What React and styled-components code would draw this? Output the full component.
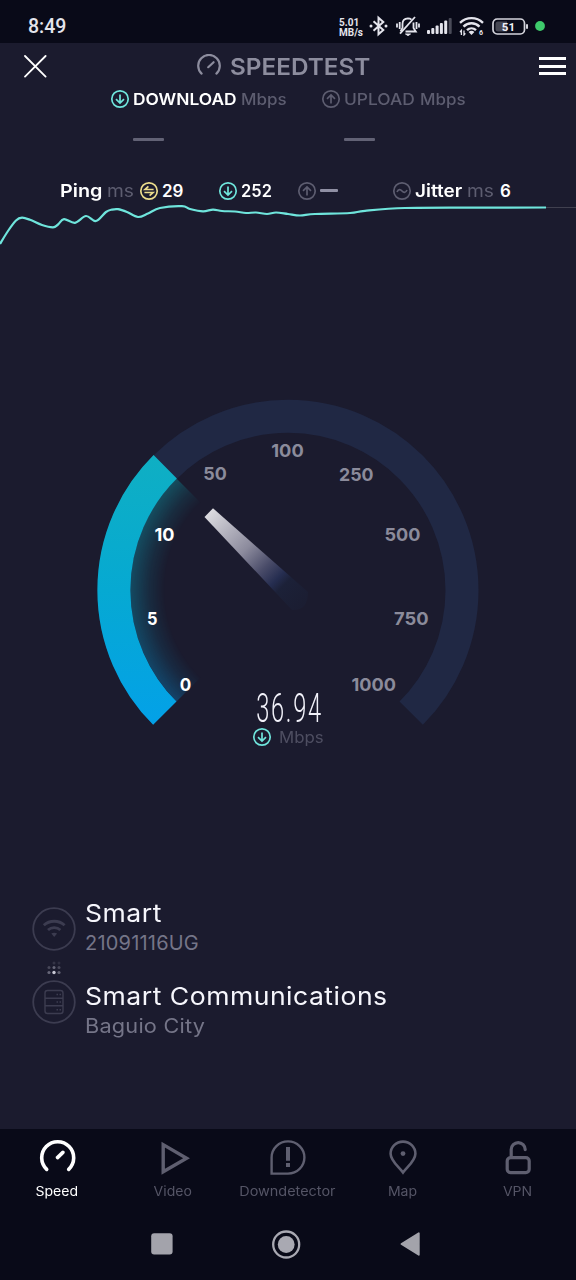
import React from "react";
import styled, {createGlobalStyle} from "styled-components";

const GlobalStyle = createGlobalStyle`
    * {
        box-sizing: border-box;
    }
    body {
        margin: 0;
        background: #1b1b2e;
        font-family: Inter, "Open Sans", sans-serif;
    }
    svg {
        display: block;
        flex-shrink: 0;
    }
`;

const Screen = styled.div`
    width: 576px;
    height: 1280px;
    display: flex;
    flex-direction: column;
    background: #1b1b2e;
    overflow: hidden;
`;

const StatusBar = styled.div`
    height: 43px;
    padding: 10px 31px 0 28px;
    display: flex;
    align-items: center;
    justify-content: space-between;
    background: #090a18;
    color: #e4e4ec;
    font-family: Roboto, sans-serif;
`;

const Clock = styled.span`
    font-size: 19.5px;
    font-weight: 500;
    line-height: 32px;
    padding-top: 1px;
`;

const StatusIcons = styled.div`
    display: flex;
    align-items: center;
    margin-top: -1px;
`;

const NetSpeed = styled.div`
    width: 30px;
    padding-top: 3px;
    display: flex;
    flex-direction: column;
    font-size: 10px;
    font-weight: 700;
    white-space: nowrap;
    span{
        height: 10px;
        line-height: 10px;
    }
`;

const StatusIcon = styled.svg`
    margin-right: ${props => props.$gap || 0}px;
`;

const Header = styled.div`
    height: 46px;
    padding: 0 10px 0 24px;
    display: grid;
    grid-template-columns: 173px 1fr 27px;
    align-items: center;
`;

const Brand = styled.div`
    display: flex;
    align-items: center;
    gap: 9px;
    color: #8d8d9e;
`;

const BrandName = styled.span`
    padding-top: 1px;
    font-size: 23.5px;
    font-weight: 600;
    line-height: 30px;
    transform: scaleX(1.035);
    transform-origin: left;
`;

const Burger = styled.div`
    display: flex;
    flex-direction: column;
    gap: 4.6px;
    span{
        height: 3px;
        background: #ffffff;
    }
`;

const Results = styled.div`
    height: 91px;
    display: flex;
`;

const Result = styled.div`
    width: ${props => props.$width}px;
    padding-left: ${props => props.$left}px;
    display: flex;
    flex-direction: column;
`;

const Line = styled.div`
    height: 20px;
    display: flex;
    align-items: center;
`;

const Label = styled.span`
    width: ${props => props.$width}px;
    margin-left: ${props => props.$left || 0}px;
    color: ${props => props.$color || "#ffffff"};
    font-size: ${props => props.$size || 16}px;
    font-weight: ${props => props.$weight || 600};
    line-height: 20px;
    white-space: nowrap;
    flex-shrink: 0;
    transform: scaleX(${props => props.$stretch || 1});
    transform-origin: left;
`;

const Dash = styled.div`
    width: ${props => props.$width}px;
    height: 3px;
    margin: ${props => props.$margin};
    border-radius: 1px;
    background: ${props => props.$color};
`;

const Stats = styled(Line)`
    padding-left: 60px;
    height: 21px;
`;

const ChartWrap = styled.div`
    height: 50px;
    margin-top: -1px;
`;

const GaugeWrap = styled.div`
    margin-top: 149px;
    height: 288px;
    display: flex;
    justify-content: center;
    svg{
        overflow: visible;
    }
`;

const Reading = styled.div`
    height: 73px;
    display: flex;
    flex-direction: column;
    align-items: center;
`;

const Speed = styled.div`
    height: 40px;
    margin-left: 3px;
    color: #f2f2fa;
    font-family: Roboto, sans-serif;
    font-size: 41.5px;
    font-weight: 300;
    line-height: 42px;
    letter-spacing: 3px;
    transform: scaleX(0.57);
`;

const Info = styled.div`
    flex: 1;
    padding: 138px 32px 0;
    display: flex;
    gap: 9px;
`;

const InfoIcons = styled.div`
    width: 44px;
    padding-top: 9px;
    display: flex;
    flex-direction: column;
    align-items: center;
`;

const InfoText = styled.div`
    display: flex;
    flex-direction: column;
`;

const InfoName = styled.div`
    height: 30px;
    color: #f6f6fc;
    font-size: 24.5px;
    font-weight: 400;
    line-height: 30px;
    letter-spacing: 0.45px;
    white-space: nowrap;
    transform: scaleX(1.085);
    transform-origin: left;
`;

const InfoDetail = styled.div`
    height: 30px;
    margin-bottom: 23px;
    color: #757588;
    font-size: 20px;
    font-weight: 400;
    line-height: 31px;
    letter-spacing: 0.2px;
    transform: scaleX(${props => props.$stretch});
    transform-origin: left;
`;

const TabBar = styled.div`
    height: 79px;
    padding-top: 9px;
    display: grid;
    grid-template-columns: repeat(5, 1fr);
    background: #090a18;
`;

const Tab = styled.div`
    display: flex;
    flex-direction: column;
    align-items: center;
    color: ${props => props.$active ? "#ffffff" : "#5f5f70"};
    span{
        margin-top: 4px;
        margin-right: 1px;
        font-size: 13px;
        line-height: 18px;
        color: ${props => props.$active ? "#ffffff" : "#555566"};
        transform: scaleX(${props => props.$stretch || 1.08});
    }
`;

const SystemNav = styled.div`
    height: 72px;
    padding-left: 151px;
    display: flex;
    align-items: center;
    background: #090a18;
`;

const NavIcon = styled.svg`
    margin-right: ${props => props.$gap || 0}px;
`;

const MUTED = "#5d5d70";
const CYAN = "#6fe5dc";

const RingIcon = ({kind, color}) => (
    <svg width="20" height="20" viewBox="0 0 20 20" fill="none" stroke={color} strokeWidth="1.7">
        <circle cx="10" cy="10" r="8.2" />
        {kind === "down" && <path d="M10 5.6V13.8M6 10.2L10 14L14 10.2" />}
        {kind === "up" && <path d="M10 14.4V6.2M6 9.8L10 6L14 9.8" />}
        {kind === "ping" && <path d="M14.6 8.5H6L9.4 5.4M5.4 11.5H14L10.6 14.6" />}
        {kind === "jitter" && <path d="M5 11C6.5 7.8 8.4 8.2 10 10C11.6 11.8 13.5 12.2 15 9" />}
    </svg>
);

const trace = [
    [0, 244], [8, 231], [16, 220.5], [22, 217.7], [30, 219.8], [42, 225], [53, 227.3], [58, 224.5],
    [64, 219.2], [75, 222.8], [86, 216], [96, 221], [106, 212], [112, 209.6], [118, 209.2], [127, 212],
    [138, 217], [148, 213.5], [160, 208], [182, 206.2], [190, 209], [203, 211.3], [213, 209.6],
    [222, 211], [235, 211.5], [246, 213], [256, 212.5], [267, 214], [276, 212.5], [288, 214],
    [300, 215.5], [315, 214], [350, 213], [365, 210.8], [405, 208], [470, 207.6], [546, 207.5],
];

const smooth = (pts) => {
    let d = `M${pts[0][0]} ${pts[0][1]}`;
    for(let i = 0; i < pts.length - 1; i++){
        const a = pts[i - 1] || pts[i];
        const b = pts[i];
        const c = pts[i + 1];
        const e = pts[i + 2] || c;
        d += ` C${b[0] + (c[0] - a[0]) / 6} ${b[1] + (c[1] - a[1]) / 6} ${c[0] - (e[0] - b[0]) / 6} ${c[1] - (e[1] - b[1]) / 6} ${c[0]} ${c[1]}`;
    }
    return d;
}

const marks = [
    {text: "0", x: 185.5, y: 684.5, w: 11.5, on: true},
    {text: "5", x: 152.3, y: 618.3, w: 10.5, on: true},
    {text: "10", x: 164.5, y: 534.5, w: 20, on: true},
    {text: "50", x: 215, y: 473.3, w: 23.5},
    {text: "100", x: 287.5, y: 450.3, w: 32.5},
    {text: "250", x: 356.3, y: 474.5, w: 34.5},
    {text: "500", x: 402.5, y: 534.8, w: 36},
    {text: "750", x: 411.3, y: 618.3, w: 34.5},
    {text: "1000", x: 373.7, y: 684.5, w: 44.5},
];

const Gauge = () => (
    <svg width="382" height="290" viewBox="97 399 382 290">
        <defs>
            <linearGradient id="fill" x1="0" y1="455" x2="0" y2="725" gradientUnits="userSpaceOnUse">
                <stop offset="0" stopColor="#0fafc3" />
                <stop offset="0.5" stopColor="#06a9d2" />
                <stop offset="1" stopColor="#03a1e8" />
            </linearGradient>
            <linearGradient id="glowFill" x1="0" y1="479" x2="0" y2="701" gradientUnits="userSpaceOnUse">
                <stop offset="0" stopColor="#0f8f9c" />
                <stop offset="0.6" stopColor="#0b83a4" />
                <stop offset="1" stopColor="#0a76b6" />
            </linearGradient>
            <radialGradient id="fade" cx="288" cy="590" r="158" gradientUnits="userSpaceOnUse">
                <stop offset="0.78" stopColor="#fff" stopOpacity="0" />
                <stop offset="0.88" stopColor="#fff" stopOpacity="0.16" />
                <stop offset="1" stopColor="#fff" stopOpacity="0.45" />
            </radialGradient>
            <mask id="fadeMask" maskUnits="userSpaceOnUse" x="97" y="399" width="382" height="340">
                <rect x="97" y="399" width="382" height="340" fill="url(#fade)" />
            </mask>
            <linearGradient id="needle" x1="208.5" y1="512.5" x2="301" y2="605" gradientUnits="userSpaceOnUse">
                <stop offset="0" stopColor="#dcdbe0" />
                <stop offset="0.4" stopColor="#8c8b9d" />
                <stop offset="0.6" stopColor="#4a4c69" />
                <stop offset="0.73" stopColor="#252d50" />
                <stop offset="0.8" stopColor="#1c2138" />
                <stop offset="1" stopColor="#1b1f35" stopOpacity="0.6" />
            </linearGradient>
        </defs>
        <path d="M164.8 713.2A174 174 0 1 1 411.2 713.2" fill="none" stroke="#202844" strokeWidth="33" />
        <path d="M288 590L176.5 701.5A157.7 157.7 0 0 1 176.5 478.5Z" fill="url(#glowFill)" mask="url(#fadeMask)" />
        <path d="M164.8 713.2A174 174 0 0 1 165.2 466.8" fill="none" stroke="url(#fill)" strokeWidth="33" />
        <path d="M204.5 517L213 508.3L308 592Q308 611 292 610Z" fill="url(#needle)" />
        {marks.map(m => (
            <text key={m.text} x={m.x - m.w / 2} y={m.y + 6.5} textLength={m.w} lengthAdjust="spacingAndGlyphs"
                fill={m.on ? "#ffffff" : "#8b8b9b"} fontSize="18" fontWeight="700">{m.text}</text>
        ))}
    </svg>
);

const App = () => {
    return(
        <Screen>
            <GlobalStyle />
            <StatusBar>
                <Clock>8:49</Clock>
                <StatusIcons>
                    <NetSpeed><span>5.01</span><span>MB/s</span></NetSpeed>
                    <StatusIcon $gap={8} width="19" height="22" viewBox="0 0 19 22" fill="none" stroke="#e4e4ec" strokeWidth="2">
                        <path d="M4.5 6.2L14.3 15L9.5 19.2V2.8L14.3 7L4.5 15.8" />
                        <circle cx="2" cy="11" r="1.5" fill="#e4e4ec" stroke="none" />
                        <circle cx="17" cy="11" r="1.5" fill="#e4e4ec" stroke="none" />
                    </StatusIcon>
                    <StatusIcon $gap={7} width="24" height="22" viewBox="0 0 24 22" fill="none" stroke="#e4e4ec" strokeWidth="1.8">
                        <path d="M6.5 13V9C6.5 5.5 8.5 3.6 12 3.4C13.5 3.4 14.5 3.8 15.5 4.6M17.5 7.5V13L19.8 16.5H9.5M6.5 13L4.5 16.4" />
                        <path d="M19 2L4 18.6" />
                        <path d="M9.5 19H14.5L12 20.6Z" fill="#e4e4ec" strokeWidth="1" />
                        <path d="M3.7 7V14M1 8.5V12.5M20.5 7V14M23 8.5V12.5" />
                    </StatusIcon>
                    <StatusIcon $gap={7} width="25" height="18" viewBox="0 0 25 18" fill="#e4e4ec">
                        <rect x="0" y="13" width="3" height="4" rx="1" />
                        <rect x="4.3" y="11" width="3" height="6" rx="1" />
                        <rect x="8.6" y="8.5" width="3" height="8.5" rx="1" />
                        <rect x="12.9" y="6" width="3" height="11" rx="1" />
                        <rect x="17.2" y="3.5" width="3" height="13.5" rx="1" />
                        <rect x="21.7" y="1" width="3" height="16" rx="1" fill="#4a4b58" />
                    </StatusIcon>
                    <StatusIcon $gap={8} width="25" height="20" viewBox="0 0 25 20" fill="none" stroke="#e4e4ec" strokeWidth="2.4">
                        <path d="M1 6.8C7.5 0.6 17.5 0.6 24 6.8" />
                        <path d="M4.5 10.6C9 6.2 16 6.2 20.5 10.6" />
                        <path d="M8 14.2C10.6 11.7 14.4 11.7 17 14.2" />
                        <path d="M9.6 16C11.3 14.4 13.7 14.4 15.4 16L12.5 19Z" fill="#e4e4ec" stroke="none" />
                        <path d="M2.4 19V14.5L1 16M5 14.5V19L6.4 17.4" strokeWidth="1.3" />
                        <text x="20" y="19.2" fill="#e4e4ec" stroke="none" fontSize="7" fontWeight="700">6</text>
                    </StatusIcon>
                    <StatusIcon $gap={7} width="36" height="17" viewBox="0 0 36 17" fill="none">
                        <rect x="1" y="1" width="31.5" height="15" rx="4.2" stroke="#d4d4dc" strokeWidth="1.7" />
                        <path d="M6 3.5H15V13.5H6Q3.5 13.5 3.5 11V6Q3.5 3.5 6 3.5Z" fill="#464753" />
                        <rect x="34" y="6" width="2" height="5" rx="1" fill="#d4d4dc" />
                        <text x="16.4" y="12.5" fill="#f0f0f6" textAnchor="middle" fontSize="11.5" fontWeight="700">51</text>
                    </StatusIcon>
                    <StatusIcon width="10" height="10" viewBox="0 0 10 10">
                        <circle cx="5" cy="5" r="4.9" fill="#3ecb6c" />
                    </StatusIcon>
                </StatusIcons>
            </StatusBar>

            <Header>
                <svg width="23" height="23" viewBox="0 0 23 23" stroke="#ffffff" strokeWidth="1.8" strokeLinecap="round">
                    <path d="M1 1L21.6 21.6M21.6 1L1 21.6" />
                </svg>
                <Brand>
                    <svg width="24" height="24" viewBox="0 0 24 24" fill="none" stroke="#8d8d9e" strokeWidth="2.2" strokeLinecap="round">
                        <path d="M4.6 19.6A10.8 10.8 0 1 1 19.4 19.6" />
                        <path d="M11.2 13.2L16.6 8.2" />
                    </svg>
                    <BrandName>SPEEDTEST</BrandName>
                </Brand>
                <Burger><span /><span /><span /></Burger>
            </Header>

            <Results>
                <Result $left={110} $width={321}>
                    <Line>
                        <RingIcon kind="down" color={CYAN} />
                        <Label $left={3} $width={108} $stretch={1.085}>DOWNLOAD</Label>
                        <Label $width={50} $color={MUTED} $weight={500} $stretch={1.06}>Mbps</Label>
                    </Line>
                    <Dash $width={31} $margin="29px 0 0 23px" $color="#626275" />
                </Result>
                <Result $left={0} $width={200}>
                    <Line>
                        <RingIcon kind="up" color={MUTED} />
                        <Label $left={3} $width={76} $color={MUTED} $weight={500} $stretch={1.085}>UPLOAD</Label>
                        <Label $width={50} $color={MUTED} $weight={500} $stretch={1.06}>Mbps</Label>
                    </Line>
                    <Dash $width={31} $margin="29px 0 0 23px" $color="#626275" />
                </Result>
            </Results>

            <Stats>
                <Label $width={47} $size={17.5} $stretch={1.13}>Ping</Label>
                <Label $width={32} $size={17} $weight={400} $color={MUTED} $stretch={1.13}>ms</Label>
                <RingIcon kind="ping" color="#ebdc8c" />
                <Label $left={3} $width={56} $size={17}>29</Label>
                <RingIcon kind="down" color={CYAN} />
                <Label $left={3} $width={56} $size={17} $stretch={0.97}>252</Label>
                <RingIcon kind="up" color={MUTED} />
                <Dash $width={18} $margin="0 54px 0 3px" $color="#9090a4" />
                <RingIcon kind="jitter" color={MUTED} />
                <Label $left={3} $width={52} $size={17.5} $stretch={1.08}>Jitter</Label>
                <Label $width={33} $size={17} $weight={400} $color={MUTED} $stretch={1.13}>ms</Label>
                <Label $width={20} $size={17}>6</Label>
            </Stats>

            <ChartWrap>
                <svg width="576" height="50" viewBox="0 200 576 50" fill="none">
                    <path d="M546 207.5H576" stroke="#40404f" />
                    <path d={smooth(trace)} stroke={CYAN} strokeWidth="2.2" />
                </svg>
            </ChartWrap>

            <GaugeWrap>
                <Gauge />
            </GaugeWrap>
            <Reading>
                <Speed>36.94</Speed>
                <Line>
                    <RingIcon kind="down" color={CYAN} />
                    <Label $left={7} $width={46} $color="#4e4e61" $weight={400} $stretch={1.05}>Mbps</Label>
                </Line>
            </Reading>

            <Info>
                <InfoIcons>
                    <svg width="44" height="44" viewBox="0 0 44 44" fill="none" stroke="#3c3c50">
                        <circle cx="22" cy="22" r="20.8" strokeWidth="1.8" />
                        <path d="M11.8 18.2C17.6 12.9 26.8 12.9 32.6 18.2" strokeWidth="2.8" />
                        <path d="M16 23C19.4 19.9 25 19.9 28.4 23" strokeWidth="2.8" />
                        <path d="M19.3 26.6C21 25.3 23.4 25.3 25.1 26.6L22.2 30Z" fill="#3c3c50" stroke="none" />
                    </svg>
                    <svg width="16" height="29" viewBox="0 0 16 29" fill="#9a9aaa">
                        <circle cx="8" cy="12" r="1.5" opacity="0.2" />
                        <circle cx="13" cy="12" r="1.5" opacity="0.15" />
                        <circle cx="3" cy="16.5" r="1.5" opacity="0.35" />
                        <circle cx="8" cy="16.5" r="1.5" opacity="0.6" />
                        <circle cx="13" cy="16.5" r="1.5" opacity="0.35" />
                        <circle cx="3" cy="21.5" r="1.6" opacity="0.6" />
                        <circle cx="8" cy="21.5" r="1.7" fill="#c8c8d4" />
                        <circle cx="13" cy="21.5" r="1.6" opacity="0.55" />
                    </svg>
                    <svg width="44" height="44" viewBox="0 0 44 44" fill="none" stroke="#3c3c50">
                        <circle cx="22" cy="22" r="20.8" strokeWidth="1.8" />
                        <rect x="13" y="10.5" width="18" height="23" rx="2.5" strokeWidth="1.4" />
                        <path d="M13 18.2H31M13 25.8H31" strokeWidth="1.4" />
                        <path d="M24.5 14.5H26M27.5 14.5H29M24.5 22H26M27.5 22H29M24.5 29.7H26M27.5 29.7H29" strokeWidth="1.6" />
                    </svg>
                </InfoIcons>
                <InfoText>
                    <InfoName>Smart</InfoName>
                    <InfoDetail $stretch={1}>21091116UG</InfoDetail>
                    <InfoName>Smart Communications</InfoName>
                    <InfoDetail $stretch={1.085}>Baguio City</InfoDetail>
                </InfoText>
            </Info>

            <TabBar>
                <Tab $active>
                    <svg width="40" height="40" viewBox="0.7 0 40 40" fill="none" stroke="currentColor" strokeWidth="3.6" strokeLinecap="round">
                        <path d="M9.4 31.4A16 16 0 1 1 31.4 31.4" />
                        <path d="M20.2 19.6L25.6 14.4" />
                    </svg>
                    <span>Speed</span>
                </Tab>
                <Tab>
                    <svg width="40" height="40" viewBox="0 0 40 40" fill="none" stroke="currentColor" strokeWidth="3.4">
                        <path d="M10.2 6.6L33.6 20.2L10.2 33.8Z" />
                    </svg>
                    <span>Video</span>
                </Tab>
                <Tab $stretch={1.11}>
                    <svg width="40" height="40" viewBox="0 0 40 40" fill="none" stroke="currentColor" strokeWidth="2.4">
                        <path d="M3.6 35.6V19.5A16.4 16.1 0 1 1 20 35.6Z" />
                        <path d="M20 9V22.8M20 25V29" strokeWidth="4" />
                    </svg>
                    <span>Downdetector</span>
                </Tab>
                <Tab>
                    <svg width="40" height="40" viewBox="0 0 40 40" fill="none" stroke="currentColor" strokeWidth="2.6">
                        <path d="M20 34.6C16 29 7.6 23 7.6 15.8A12.4 12.2 0 0 1 32.4 15.8C32.4 23 24 29 20 34.6Z" />
                        <circle cx="20" cy="15.6" r="2.4" fill="currentColor" stroke="none" />
                    </svg>
                    <span>Map</span>
                </Tab>
                <Tab>
                    <svg width="40" height="40" viewBox="0 0 40 40" fill="none" stroke="currentColor" strokeWidth="3.2" strokeLinecap="round">
                        <rect x="9.2" y="19.6" width="22" height="15" rx="3.4" />
                        <path d="M13.2 19V11.6A7 7 0 0 1 27.2 11.6" />
                    </svg>
                    <span>VPN</span>
                </Tab>
            </TabBar>

            <SystemNav>
                <NavIcon $gap={99} width="22" height="22" viewBox="0 0 22 22">
                    <rect x="0.2" y="0.2" width="21.4" height="21.4" rx="3" fill="#a3a3ab" />
                </NavIcon>
                <NavIcon $gap={99} width="29" height="29" viewBox="0 0 29 29">
                    <circle cx="14.2" cy="14.5" r="13" fill="none" stroke="#a9a9b2" strokeWidth="2.3" />
                    <circle cx="14.2" cy="14.5" r="8.4" fill="#a9a9b2" />
                </NavIcon>
                <NavIcon width="20" height="24" viewBox="0 0 20 24">
                    <path d="M1.5 12L18.8 1.2V22.8Z" fill="#a3a3ab" stroke="#a3a3ab" strokeWidth="1.8" strokeLinejoin="round" />
                </NavIcon>
            </SystemNav>
        </Screen>
    )
}

export default App;
